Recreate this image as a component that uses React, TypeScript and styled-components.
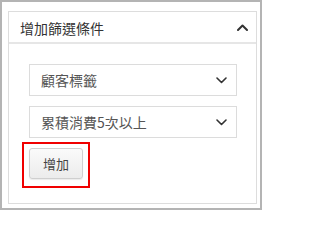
import styled, { createGlobalStyle } from "styled-components";

const GlobalStyle = createGlobalStyle`
  html, body {
    margin: 0;
    padding: 0;
    background: #ffffff;
  }
  body {
    font-family: "Noto Sans CJK TC", "Liberation Sans", sans-serif;
  }
`;

const Frame = styled.div`
  width: 262px;
  height: 210px;
  box-sizing: border-box;
  border: 2px solid #b4b4b4;
  padding: 9px 3px 4px 6px;
  background: #fff;
`;

const Panel = styled.section`
  height: 100%;
  box-sizing: border-box;
  border: 1px solid #dddddd;
  display: flex;
  flex-direction: column;
`;

const Header = styled.div`
  height: 30px;
  display: flex;
  align-items: center;
  justify-content: space-between;
  padding: 0 8px 0 11px;
  border-bottom: 2px solid #e6e6e6;
`;

const Title = styled.span`
  font-size: 14px;
  line-height: 16px;
  color: #333;
  margin-top: 1px;
`;

const Body = styled.div`
  display: flex;
  flex-direction: column;
  align-items: flex-start;
  padding: 20px 18px 0 20px;
  gap: 10px;
`;

const Select = styled.div`
  width: 208px;
  height: 32px;
  box-sizing: border-box;
  border: 1px solid #dcdcdc;
  display: flex;
  align-items: center;
  justify-content: space-between;
  padding: 0 9px 0 11px;
  font-size: 14px;
  color: #555;
  background: #fff;
`;

const Highlight = styled.div`
  position: relative;
  margin-top: 0;

  &::after {
    content: "";
    position: absolute;
    top: -6px;
    left: -7px;
    right: -7px;
    bottom: -9px;
    border: 2px solid #f00000;
    pointer-events: none;
  }
`;

const Button = styled.button`
  width: 54px;
  height: 31px;
  box-sizing: border-box;
  border: 1px solid #cfcfcf;
  border-radius: 3px;
  background: linear-gradient(#fafafa, #ececec);
  box-shadow: 0 1px 1px rgba(0, 0, 0, 0.08);
  font-family: inherit;
  font-size: 13px;
  color: #444;
  padding: 0;
  cursor: pointer;
`;

const Chevron = ({ up }: { up?: boolean }) => (
  <svg width="11" height="7" viewBox="0 0 11 7" fill="none">
    <path
      d={up ? "M1 6 L5.5 1.5 L10 6" : "M1 1 L5.5 5.5 L10 1"}
      stroke="#333"
      strokeWidth={up ? 2 : 1.6}
      strokeLinecap="round"
      strokeLinejoin="round"
    />
  </svg>
);

export default function App() {
  return (
    <>
      <GlobalStyle />
      <Frame>
        <Panel>
          <Header>
            <Title>增加篩選條件</Title>
            <Chevron up />
          </Header>
          <Body>
            <Select>
              <span>顧客標籤</span>
              <Chevron />
            </Select>
            <Select>
              <span>累積消費5次以上</span>
              <Chevron />
            </Select>
            <Highlight>
              <Button>增加</Button>
            </Highlight>
          </Body>
        </Panel>
      </Frame>
    </>
  );
}
